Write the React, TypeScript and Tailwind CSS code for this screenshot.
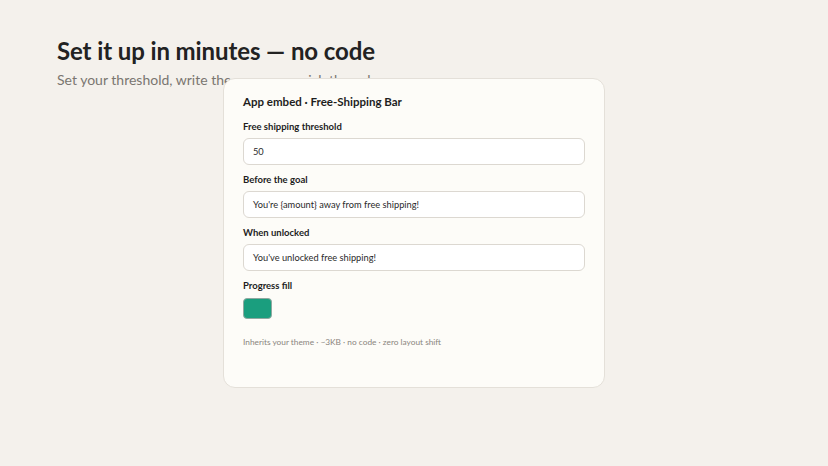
const FIELDS = [
  { label: "Free shipping threshold", value: "50" },
  { label: "Before the goal", value: "You're {amount} away from free shipping!" },
  { label: "When unlocked", value: "You've unlocked free shipping!" },
];

export default function App() {
  return (
    <div
      className="relative w-[828px] h-[466px] bg-[#f4f1ec] overflow-hidden"
      style={{ fontFamily: "Lato, 'Noto Sans', sans-serif" }}
    >
      {/* Section header */}
      <div className="px-[57px] pt-[36px]">
        <h1 className="text-[24px] leading-[30px] font-bold text-[#222] tracking-[-0.1px]">
          Set it up in minutes — no code
        </h1>
        <p className="mt-[5px] text-[14px] leading-[18px] text-[#7a7670]">
          Set your threshold, write the messages, pick the colour.
        </p>
      </div>

      {/* Settings card, laid over the subtitle */}
      <div className="absolute left-[223px] top-[78px] w-[382px] h-[310px] bg-[#fdfcf8] border border-[#e4e0d9] rounded-[12px] px-[19px] pt-[15px]">
        <h2 className="text-[11.5px] leading-[16px] font-bold text-[#1e1e1e]">
          App embed · Free-Shipping Bar
        </h2>

        <div className="mt-[11px] flex flex-col gap-[9px]">
          {FIELDS.map(({ label, value }) => (
            <div key={label}>
              <p className="text-[9.5px] leading-[12px] font-bold text-[#1e1e1e]">{label}</p>
              <div className="mt-[5px] h-[27px] bg-white border border-[#dcd8d1] rounded-[6px] px-[9px] flex items-center text-[9.25px] text-[#2a2a2a]">
                {value}
              </div>
            </div>
          ))}
        </div>

        <p className="mt-[9px] text-[9.5px] leading-[12px] font-bold text-[#1e1e1e]">Progress fill</p>
        <div className="mt-[6px] w-[29px] h-[21px] rounded-[4px] bg-[#1a9e7e] border border-[#8fa8a0]" />

        <p className="mt-[17px] text-[8.3px] leading-[12px] text-[#8a857e]">
          Inherits your theme · ~3KB · no code · zero layout shift
        </p>
      </div>
    </div>
  );
}
